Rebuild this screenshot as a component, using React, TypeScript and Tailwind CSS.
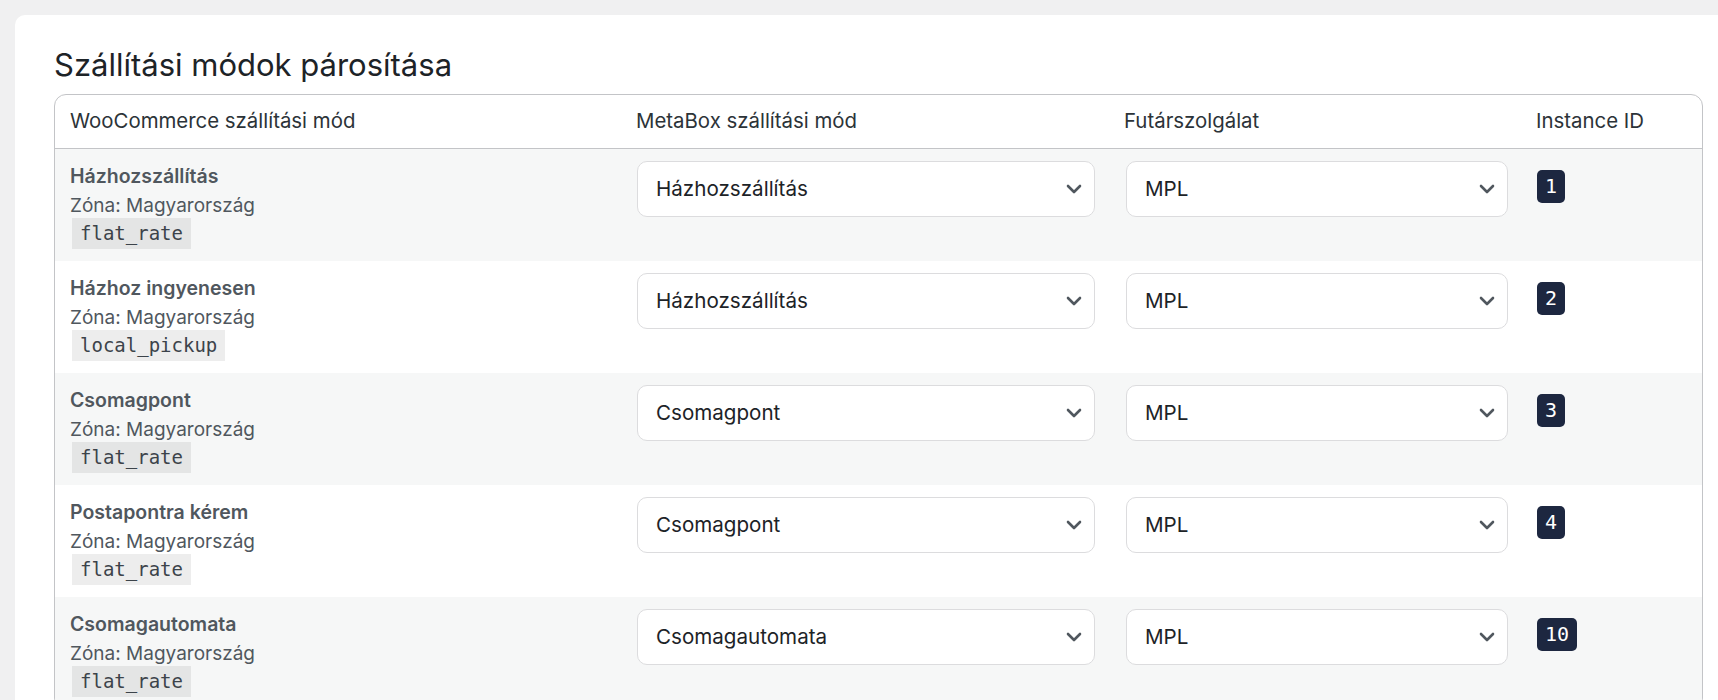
import React from "react";

type Row = {
  name: string;
  zone: string;
  method: string;
  metabox: string;
  courier: string;
  id: string;
};

const rows: Row[] = [
  { name: "Házhozszállítás", zone: "Magyarország", method: "flat_rate", metabox: "Házhozszállítás", courier: "MPL", id: "1" },
  { name: "Házhoz ingyenesen", zone: "Magyarország", method: "local_pickup", metabox: "Házhozszállítás", courier: "MPL", id: "2" },
  { name: "Csomagpont", zone: "Magyarország", method: "flat_rate", metabox: "Csomagpont", courier: "MPL", id: "3" },
  { name: "Postapontra kérem", zone: "Magyarország", method: "flat_rate", metabox: "Csomagpont", courier: "MPL", id: "4" },
  { name: "Csomagautomata", zone: "Magyarország", method: "flat_rate", metabox: "Csomagautomata", courier: "MPL", id: "10" },
];

const metaboxOptions = ["Házhozszállítás", "Csomagpont", "Csomagautomata"];
const courierOptions = ["MPL", "GLS", "DPD", "Foxpost"];

const Chevron = () => (
  <svg
    width="16"
    height="10"
    viewBox="0 0 16 10"
    fill="none"
    className="pointer-events-none absolute right-[13px] top-1/2 -translate-y-1/2"
  >
    <path d="M2 2L8 8L14 2" stroke="#50575e" strokeWidth="2.6" strokeLinecap="round" strokeLinejoin="round" />
  </svg>
);

const Select = ({ value, options }: { value: string; options: string[] }) => (
  <div className="relative">
    <select
      defaultValue={value}
      className="block h-[56px] w-full appearance-none rounded-[10px] border border-[#dcdcde] bg-white pl-[18px] pr-10 text-[20.6px] text-[#1d2327] outline-none"
    >
      {options.map((o) => (
        <option key={o} value={o}>
          {o}
        </option>
      ))}
    </select>
    <Chevron />
  </div>
);

export default function App() {
  return (
    <div
      className="min-h-screen w-full overflow-hidden bg-[#f0f0f1] pt-[15px] pl-[15px]"
      style={{ fontFamily: "Inter, 'Noto Sans', sans-serif" }}
    >
      <div className="w-[1728px] min-h-[700px] rounded-[10px] bg-white pl-[39px] pt-[31px]">
        {/* Title */}
        <h1 className="mb-[10px] text-[31px] leading-[38px] font-normal text-[#1d2327]">
          Szállítási módok párosítása
        </h1>

        {/* Mapping table */}
        <div className="w-[1649px] overflow-hidden rounded-[12px] border border-[#c3c4c7]">
          <table className="w-full table-fixed border-separate border-spacing-0 text-left">
            <colgroup>
              <col className="w-[566px]" />
              <col className="w-[488px]" />
              <col className="w-[412px]" />
              <col className="w-[181px]" />
            </colgroup>
            <thead>
              <tr>
                {["WooCommerce szállítási mód", "MetaBox szállítási mód", "Futárszolgálat", "Instance ID"].map((h) => (
                  <th
                    key={h}
                    className="border-b border-[#c3c4c7] px-[15px] pt-[11px] pb-[12px] text-[20.4px] leading-[30px] font-normal text-[#2c3338]"
                  >
                    {h}
                  </th>
                ))}
              </tr>
            </thead>
            <tbody>
              {rows.map((r, i) => (
                <tr key={r.id} className={i % 2 === 0 ? "bg-[#f6f7f7]" : "bg-white"}>
                  <td className="px-[15px] py-[12px] align-top">
                    <div className="text-[19.5px] leading-[30px] font-semibold text-[#50575e]">{r.name}</div>
                    <div className="mt-[3px] text-[19px] leading-[24px] text-[#50575e]">Zóna: {r.zone}</div>
                    <code
                      className="ml-[2px] inline-block h-[31px] bg-black/[0.07] px-[8px] text-[19px] leading-[31px] text-[#3c434a]"
                      style={{ fontFamily: "'DejaVu Sans Mono', 'Liberation Mono', monospace" }}
                    >
                      {r.method}
                    </code>
                  </td>
                  <td className="pl-[16px] pr-[14px] py-[12px] align-top">
                    <Select value={r.metabox} options={metaboxOptions} />
                  </td>
                  <td className="pl-[17px] pr-[13px] py-[12px] align-top">
                    <Select value={r.courier} options={courierOptions} />
                  </td>
                  <td className="px-[16px] py-[12px] align-top">
                    <span
                      className="mt-[9px] inline-block h-[33px] rounded-[5px] bg-[#1d2740] px-[8px] text-[20px] leading-[33px] text-white"
                      style={{ fontFamily: "'DejaVu Sans Mono', 'Liberation Mono', monospace" }}
                    >
                      {r.id}
                    </span>
                  </td>
                </tr>
              ))}
            </tbody>
          </table>
        </div>
      </div>
    </div>
  );
}
